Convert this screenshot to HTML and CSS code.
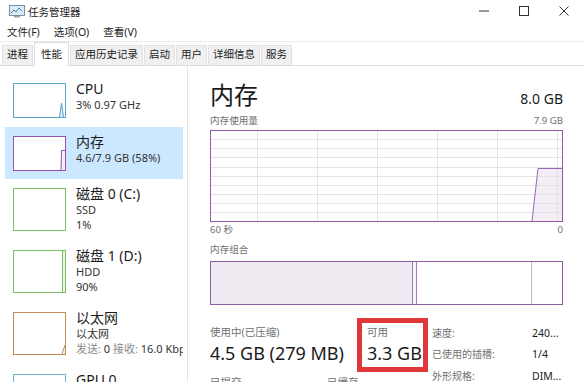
FILE: index.html
```html
<!DOCTYPE html>
<html lang="zh-CN">
<head>
<meta charset="utf-8">
<title>任务管理器</title>
<link rel="stylesheet" href="styles.css">
</head>
<body>
<div class="window">
  <header class="titlebar">
    <svg class="app-icon" viewBox="0 0 16 13" width="16" height="13">
      <rect x="0.5" y="0.5" width="15" height="10" fill="#dcebf6" stroke="#7590a6"/>
      <polyline points="2,8 5,5 7,7 10,3 13,6" fill="none" stroke="#3f83b8" stroke-width="1"/>
      <rect x="5" y="11" width="6" height="1.5" fill="#91a5b5"/>
    </svg>
    <span class="title">任务管理器</span>
    <div class="controls">
      <span class="ctl"><svg width="10" height="10" viewBox="0 0 10 10"><rect x="0" y="4.5" width="10" height="1" fill="#333"/></svg></span>
      <span class="ctl"><svg width="10" height="10" viewBox="0 0 10 10"><rect x="0.5" y="0.5" width="9" height="9" fill="none" stroke="#333"/></svg></span>
      <span class="ctl"><svg width="10" height="10" viewBox="0 0 10 10"><path d="M0.5 0.5L9.5 9.5M9.5 0.5L0.5 9.5" stroke="#333" fill="none"/></svg></span>
    </div>
  </header>
  <nav class="menubar">
    <span>文件(F)</span><span>选项(O)</span><span>查看(V)</span>
  </nav>
  <div class="tabs">
    <span class="tab">进程</span>
    <span class="tab active">性能</span>
    <span class="tab">应用历史记录</span>
    <span class="tab">启动</span>
    <span class="tab">用户</span>
    <span class="tab">详细信息</span>
    <span class="tab">服务</span>
  </div>
  <div class="content">
    <aside class="sidebar">
      <div class="item first">
        <div class="thumb cpu">
          <svg viewBox="0 0 51 33" width="51" height="33">
            <polygon points="45.5,33 47.5,19 49.5,33" fill="#e3f0f8"/>
            <polyline points="45.5,33 47.5,19 49.5,33" fill="none" stroke="#4f9fc8"/>
          </svg>
        </div>
        <div class="info"><div class="name">CPU</div><div class="sub">3% 0.97 GHz</div></div>
      </div>
      <div class="item selected">
        <div class="thumb mem">
          <svg viewBox="0 0 51 33" width="51" height="33">
            <polygon points="47,33 47.5,13 51,13 51,33" fill="#f4eef7"/>
            <polyline points="47,33 47.5,13.5 51,13.5" fill="none" stroke="#9552ac"/>
          </svg>
        </div>
        <div class="info"><div class="name">内存</div><div class="sub">4.6/7.9 GB (58%)</div></div>
      </div>
      <div class="item tall">
        <div class="thumb disk"></div>
        <div class="info"><div class="name">磁盘 0 (C:)</div><div class="sub">SSD</div><div class="sub">1%</div></div>
      </div>
      <div class="item tall">
        <div class="thumb disk">
          <svg viewBox="0 0 51 41" width="51" height="41">
            <rect x="48.5" y="0" width="2.5" height="41" fill="#eaf6e4"/>
            <line x1="48.5" y1="0" x2="48.5" y2="41" stroke="#7cc065"/>
          </svg>
        </div>
        <div class="info"><div class="name">磁盘 1 (D:)</div><div class="sub">HDD</div><div class="sub">90%</div></div>
      </div>
      <div class="item tall">
        <div class="thumb eth">
          <svg viewBox="0 0 51 41" width="51" height="41">
            <polygon points="48,41 51,32 51,41" fill="#f8efe6"/>
            <polyline points="48,41 51,32" fill="none" stroke="#c08a5a"/>
          </svg>
        </div>
        <div class="info"><div class="name">以太网</div><div class="sub">以太网</div><div class="sub"><span class="muted">发送:</span> 0 <span class="muted">接收:</span> 16.0 Kbps</div></div>
      </div>
      <div class="item tall">
        <div class="thumb gpu"></div>
        <div class="info"><div class="name">GPU 0</div></div>
      </div>
    </aside>
    <main class="panel">
      <div class="head">
        <h1 class="ptitle">内存</h1>
        <span class="psize">8.0 GB</span>
      </div>
      <div class="cap"><span>内存使用量</span><span>7.9 GB</span></div>
      <svg class="graph" viewBox="0 0 353 92" width="353" height="92">
        <polygon points="322,91 328,38.5 352,38.5 352,91" fill="#f3eef5"/>
        <g stroke="#e8e0eb" stroke-width="1">
          <line x1="47.5" y1="1" x2="47.5" y2="91"/>
          <line x1="107.5" y1="1" x2="107.5" y2="91"/>
          <line x1="167.5" y1="1" x2="167.5" y2="91"/>
          <line x1="227.5" y1="1" x2="227.5" y2="91"/>
          <line x1="287.5" y1="1" x2="287.5" y2="91"/>
          <line x1="347.5" y1="1" x2="347.5" y2="91"/>
          <line x1="1" y1="9.5" x2="352" y2="9.5"/>
          <line x1="1" y1="18.5" x2="352" y2="18.5"/>
          <line x1="1" y1="27.5" x2="352" y2="27.5"/>
          <line x1="1" y1="37.5" x2="352" y2="37.5"/>
          <line x1="1" y1="46.5" x2="352" y2="46.5"/>
          <line x1="1" y1="55.5" x2="352" y2="55.5"/>
          <line x1="1" y1="64.5" x2="352" y2="64.5"/>
          <line x1="1" y1="73.5" x2="352" y2="73.5"/>
          <line x1="1" y1="82.5" x2="352" y2="82.5"/>
        </g>
        <polyline points="322,91 328,38.5 352,38.5" fill="none" stroke="#9a68ab" stroke-width="1"/>
        <rect x="0.5" y="0.5" width="352" height="91" fill="none" stroke="#8e5a9e"/>
      </svg>
      <div class="cap axis"><span>60 秒</span><span>0</span></div>
      <div class="cap comp-label"><span>内存组合</span></div>
      <div class="comp">
        <div class="seg inuse"></div>
        <div class="seg modified"></div>
        <div class="seg standby"></div>
        <div class="seg free"></div>
      </div>
      <div class="stats">
        <div class="stats-left">
          <div class="srow">
            <div class="stat used"><div class="slabel">使用中(已压缩)</div><div class="sval">4.5 GB (279 MB)</div></div>
            <div class="stat avail"><div class="slabel">可用</div><div class="sval">3.3 GB</div></div>
          </div>
          <div class="srow second">
            <div class="stat committed"><div class="slabel">已提交</div></div>
            <div class="stat"><div class="slabel">已缓存</div></div>
          </div>
        </div>
        <dl class="kv">
          <dt>速度:</dt><dd>240...</dd>
          <dt>已使用的插槽:</dt><dd>1/4</dd>
          <dt>外形规格:</dt><dd>DIM...</dd>
        </dl>
      </div>
    </main>
  </div>
</div>
</body>
</html>
```

FILE: styles.css
```css
*, *::before, *::after { box-sizing: border-box; margin: 0; padding: 0; }
html, body { width: 584px; height: 382px; overflow: hidden; background: #fff; }
body { font-family: "Noto Sans", "Noto Sans CJK SC", sans-serif; color: #1b1b1b; }

.window { display: flex; flex-direction: column; height: 382px; }

.titlebar { height: 22px; flex: none; display: flex; align-items: center; }
.app-icon { margin-left: 9px; flex: none; }
.title { margin-left: 3px; font-size: 10.5px; color: #222; }
.controls { margin-left: auto; display: flex; height: 22px; }
.ctl { width: 40px; display: flex; align-items: center; justify-content: center; }
.ctl svg { display: block; }

.menubar { height: 20px; flex: none; display: flex; align-items: center; border-bottom: 1px solid #ededed; font-size: 10.5px; color: #222; }
.menubar span { padding: 0 7px; }

.tabs { height: 24px; flex: none; display: flex; align-items: flex-end; padding-left: 2px; border-bottom: 1px solid #dadada; }
.tab { height: 20px; line-height: 17px; padding: 0 4px; font-size: 10.5px; color: #222; background: #f0f0f0; border: 1px solid #e2e2e2; border-bottom: none; margin-right: 1px; white-space: nowrap; }
.tab.active { height: 24px; margin-bottom: -1px; padding: 3px 6px 0; background: #fff; border-color: #dadada; }

.content { flex: 1; min-height: 0; display: flex; overflow: hidden; }

.sidebar { width: 188px; flex: none; border-right: 1px solid #e6e6e6; padding-top: 8px; overflow: hidden; }
.item { margin-left: 5px; width: 178px; height: 52px; padding: 9px 0 0 8px; display: flex; align-items: flex-start; }
.item.first { height: 53px; }
.item.tall { height: 62px; }
.item.selected { background: #cce8ff; }
.thumb { width: 53px; height: 35px; flex: none; border: 1px solid #999; background: #fff; }
.thumb svg { display: block; }
.item.tall .thumb { height: 43px; }
.thumb.cpu { border-color: #5aa6cc; }
.thumb.mem { border-color: #9552ac; }
.thumb.disk { border-color: #7cc065; }
.thumb.eth { border-color: #c08a5a; }
.thumb.gpu { border-color: #6fb2cf; }
.info { margin-left: 10px; margin-top: -3px; white-space: nowrap; overflow: hidden; width: 109px; }
.name { font-size: 14px; line-height: 17px; color: #1b1b1b; }
.sub { font-size: 11px; line-height: 15px; color: #333; }
.muted { color: #8a8a8a; }

.panel { flex: 1; min-width: 0; padding: 15px 21px 0 22px; }
.head { height: 28px; display: flex; justify-content: space-between; align-items: baseline; }
.ptitle { font-size: 24px; line-height: 28px; font-weight: 400; color: #1a1a1a; }
.psize { font-size: 14px; line-height: 20px; color: #1a1a1a; }
.cap { display: flex; justify-content: space-between; font-size: 9.6px; line-height: 13px; color: #707070; margin-top: 5px; }
.graph { display: block; margin-top: 3px; }
.cap.axis { margin-top: 1px; }
.cap.comp-label { margin-top: 7px; }

.comp { margin-top: 5px; height: 44px; border: 1px solid #8e5a9e; display: flex; }
.seg { height: 100%; }
.inuse { width: 202px; background: #efe9f1; border-right: 1px solid #a47cb1; }
.modified { width: 4px; background: #f6f2f7; border-right: 1px solid #a47cb1; }
.standby { width: 115px; border-right: 1px solid #c7b0cf; }
.free { flex: 1; }

.stats { margin-top: 20px; display: flex; }
.stats-left { width: 222px; flex: none; }
.srow { display: flex; }
.srow.second { margin-top: 11px; }
.stat { white-space: nowrap; }
.stat.used { width: 157px; }
.stat.committed { width: 117px; }
.stat.avail { position: relative; }
.stat.avail::after { content: ""; position: absolute; left: -10px; top: -7px; width: 71px; height: 54px; border: 5px solid #e0383a; }
.slabel { font-size: 10.5px; line-height: 14px; color: #707070; }
.sval { font-size: 18px; line-height: 22px; margin-top: 3px; color: #1a1a1a; }

.kv { display: grid; grid-template-columns: 100px auto; font-size: 10px; line-height: 17.5px; white-space: nowrap; }
.kv dt { color: #707070; }
.kv dd { color: #1a1a1a; font-size: 10.5px; }
```
